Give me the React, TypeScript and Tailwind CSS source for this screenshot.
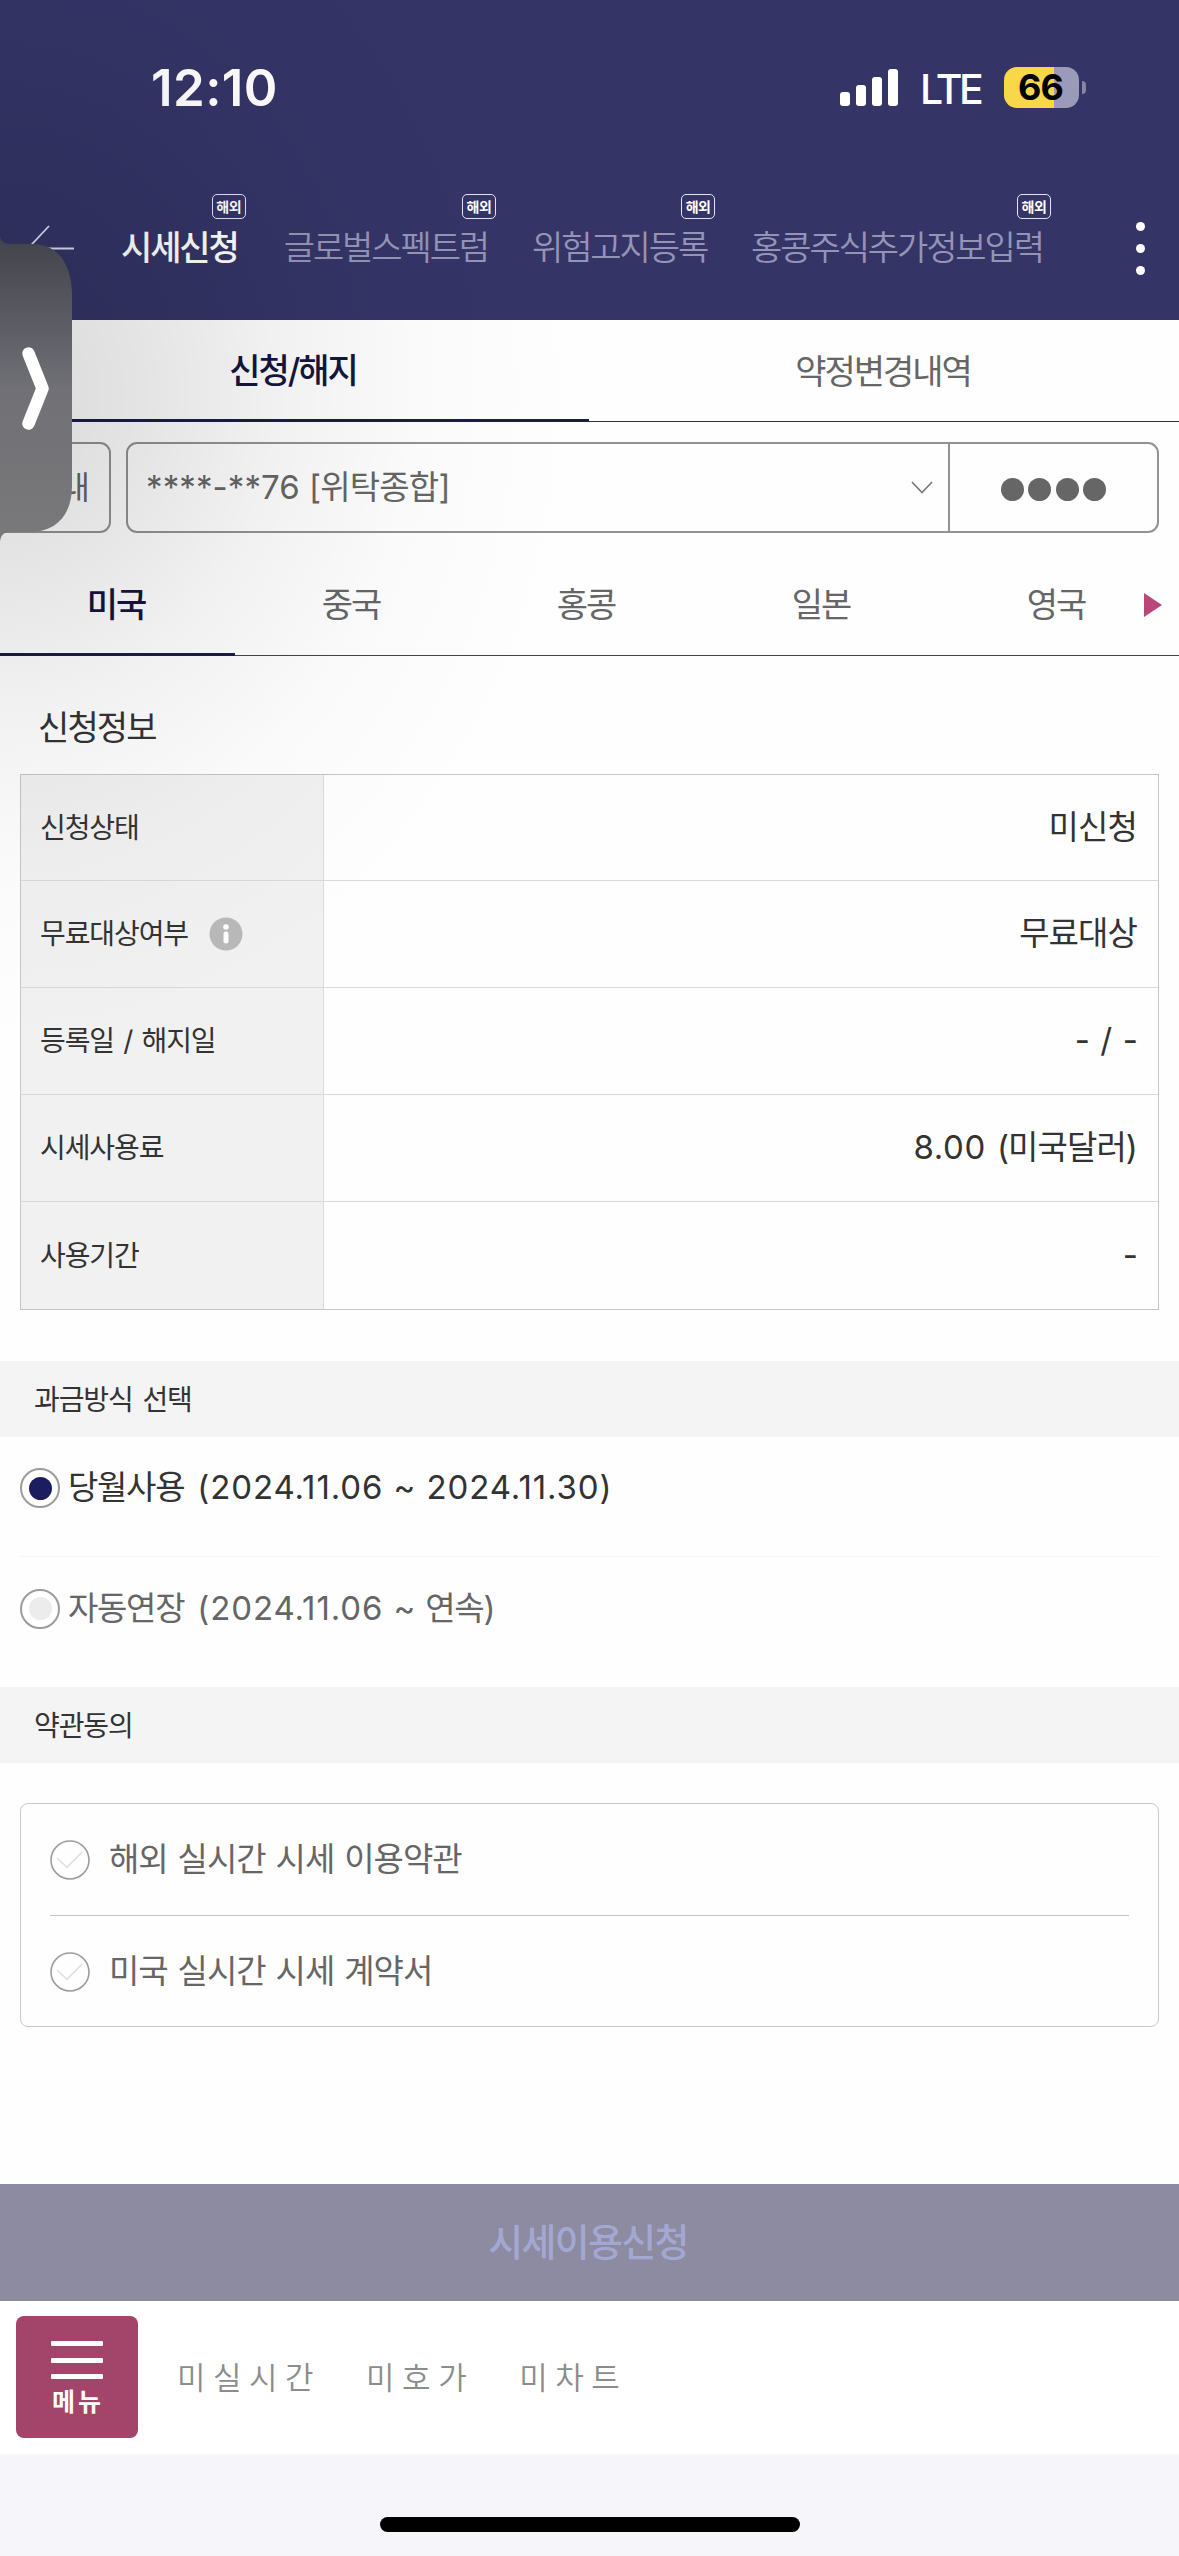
import type { ReactNode } from "react";

const menuTabs = [
  { label: "시세신청", active: true, gap: "ml-[47px]" },
  { label: "글로벌스펙트럼", active: false, gap: "ml-[46px]" },
  { label: "위험고지등록", active: false, gap: "ml-[44px]" },
  { label: "홍콩주식추가정보입력", active: false, gap: "ml-[44px]" },
];

const countries = ["미국", "중국", "홍콩", "일본", "영국"];

const rows = [
  { label: "신청상태", value: "미신청" },
  { label: "무료대상여부", value: "무료대상", info: true },
  { label: "등록일 / 해지일", value: "- / -" },
  { label: "시세사용료", value: "8.00 (미국달러)" },
  { label: "사용기간", value: "-" },
];

function StatusBar() {
  return (
    <div className="flex h-[176px] items-start pl-[151px] pr-[93px] text-white">
      <span className="mt-[58px] text-[51px] font-semibold leading-[60px] tracking-[0.4px]">
        12:10
      </span>
      <div className="ml-auto mt-[67px] flex h-[41px] items-center">
        <svg width="58" height="41" viewBox="0 0 58 41" fill="white">
          <rect x="0" y="25" width="10" height="14" rx="3" />
          <rect x="16" y="18" width="10" height="21" rx="3" />
          <rect x="32" y="10" width="10" height="29" rx="3" />
          <rect x="48" y="2" width="10" height="37" rx="3" />
        </svg>
        <span className="ml-[22px] mt-[3px] w-[84px] text-[41px] font-medium leading-[41px] tracking-[-3.6px]">
          LTE
        </span>
        <div className="flex h-[41px] w-[75px] items-center justify-center rounded-[13px] bg-[linear-gradient(90deg,#f8d84a_50px,#9b9bb9_50px)] pr-[2px] text-[36px] font-bold leading-[41px] tracking-[-1px] text-black">
          66
        </div>
        <div className="ml-[3px] h-[13px] w-[4px] rounded-r-full bg-[#85859f]" />
      </div>
    </div>
  );
}

function MenuTabs() {
  return (
    <div className="flex h-[144px] items-start">
      <svg className="ml-[26px] mt-[48px]" width="48" height="48" viewBox="0 0 48 48">
        <path d="M23 2 2 24.500H48" fill="none" stroke="#dcdcf5" strokeWidth="1.8" />
      </svg>
      {menuTabs.map((tab) => (
        <div key={tab.label} className={`flex flex-col items-end ${tab.gap}`}>
          <span className="-mr-[8px] mt-[18px] flex h-[25px] w-[34px] items-center justify-center rounded-[5px] border-[1.5px] border-[#e4e4f4] text-[14px] font-bold leading-[20px] tracking-[-0.5px] text-white">
            해외
          </span>
          <span
            className={`mt-[4px] whitespace-nowrap text-[34px] leading-[50px] tracking-[-2.1px] ${
              tab.active ? "font-medium text-white" : "font-[350] text-[#9494b6]"
            }`}
          >
            {tab.label}
          </span>
        </div>
      ))}
      <div className="ml-auto mr-[34px] mt-[46px] flex flex-col gap-[13px]">
        <i className="size-[9px] rounded-full bg-white" />
        <i className="size-[9px] rounded-full bg-white" />
        <i className="size-[9px] rounded-full bg-white" />
      </div>
    </div>
  );
}

function PageTabs() {
  return (
    <div className="flex h-[102px] text-[34px] tracking-[-2px]">
      <div className="flex w-[589px] items-center justify-center border-b-[3px] border-[#1b1d48] pr-[3px] pt-[2px] font-medium text-[#15153f]">
        신청/해지
      </div>
      <div className="flex flex-1 items-center justify-center border-b border-[#2f2f45] pr-[2px] pt-[2px] text-[#666]">
        약정변경내역
      </div>
    </div>
  );
}

function AccountRow() {
  return (
    <div className="flex h-[131px] pt-[20px] pr-[20px] text-[#666]">
      <div className="-ml-[20px] flex h-[91px] w-[131px] items-center justify-end rounded-[11px] border-2 border-[#929292] pr-[19px] text-[32px]">
        안내
      </div>
      <div className="ml-[15px] flex h-[91px] flex-1 rounded-[11px] border-2 border-[#929292]">
        <div className="flex flex-1 items-center border-r-2 border-[#929292] pl-[18px] pr-[15px] text-[33px]">
          <span className="tracking-[0.1px]">****-**76</span>
          <span className="ml-[9px] tracking-[-0.8px]">[위탁종합]</span>
          <svg className="ml-auto" width="22" height="13" viewBox="0 0 22 13">
            <path d="M1 1 11 11.5 21 1" fill="none" stroke="#777" strokeWidth="1.6" />
          </svg>
        </div>
        <div className="flex w-[207px] items-center justify-center gap-[4.5px] pt-[4px]">
          <i className="size-[23px] rounded-full bg-[#666]" />
          <i className="size-[23px] rounded-full bg-[#666]" />
          <i className="size-[23px] rounded-full bg-[#666]" />
          <i className="size-[23px] rounded-full bg-[#666]" />
        </div>
      </div>
    </div>
  );
}

function CountryTabs() {
  return (
    <div className="flex h-[103px] text-[34px] tracking-[-2px]">
      {countries.map((name, i) => (
        <div
          key={name}
          className={`flex w-[235px] shrink-0 items-center justify-center pr-[3px] ${
            i === 0
              ? "border-b-[3px] border-[#1b1d48] pt-[2px] font-medium text-[#15153f]"
              : "border-b border-[#444450] text-[#666]"
          }`}
        >
          {name}
        </div>
      ))}
      <div className="relative flex-1 border-b border-[#444450]">
        <svg className="absolute right-[17px] top-[40px]" width="18" height="24" viewBox="0 0 18 24">
          <path d="M0 0 18 12 0 24Z" fill="#b9487a" />
        </svg>
      </div>
    </div>
  );
}

function InfoTable() {
  return (
    <div className="mx-[20px] h-[536px] border border-[#c6c6c6] text-[#333]">
      {rows.map((row, i) => (
        <div
          key={row.label}
          className={`flex ${i === 0 ? "h-[106px]" : "h-[107px]"} ${
            i < rows.length - 1 ? "border-b border-[#d9d9d9]" : ""
          }`}
        >
          <div className="flex w-[303px] items-center border-r border-[#d9d9d9] bg-[#f1f1f1] pl-[19px] text-[28px] tracking-[-1.1px] [word-spacing:2.5px]">
            {row.label}
            {row.info && (
              <svg className="ml-[21px]" width="34" height="34" viewBox="0 0 34 34">
                <circle cx="17" cy="17" r="16.5" fill="#b9b9b9" />
                <circle cx="17" cy="10" r="2.8" fill="white" />
                <rect x="14.5" y="14.5" width="5" height="12" rx="2.2" fill="white" />
              </svg>
            )}
          </div>
          <div className="flex flex-1 items-center justify-end pr-[21px] text-[33px] tracking-[-0.9px] [word-spacing:3px]">
            {/* the price is set a little wider than the Korean text */}
            {row.value.startsWith("8.00") ? (
              <>
                <span className="mr-[11px] tracking-[0.6px]">8.00</span>
                {row.value.slice(5)}
              </>
            ) : (
              row.value
            )}
          </div>
        </div>
      ))}
    </div>
  );
}

function SectionBar({ children }: { children: ReactNode }) {
  return (
    <div className="flex h-[76px] items-center bg-[#f4f4f4] pl-[34px] pt-[2px] text-[28px] tracking-[-1.1px] text-[#333] [word-spacing:3px]">
      {children}
    </div>
  );
}

function RadioMark({ checked }: { checked: boolean }) {
  return (
    <span className="flex size-[40px] items-center justify-center rounded-full border-2 border-[#9c9c9c] bg-white">
      <span className={`size-[23px] rounded-full ${checked ? "bg-[#1c1d5e]" : "bg-[#ececec]"}`} />
    </span>
  );
}

function TermRow({ label }: { label: string }) {
  return (
    <div className="flex h-[111px] items-center text-[33px] tracking-[-1px] text-[#666] [word-spacing:1.6px]">
      <svg className="mr-[19px]" width="40" height="40" viewBox="0 0 40 40" fill="none">
        <circle cx="20" cy="20" r="19" stroke="#9c9c9c" strokeWidth="1.6" />
        <path d="M7 18 17 27.5 32 12" stroke="#dedede" strokeWidth="1.5" />
      </svg>
      {label}
    </div>
  );
}

function SideHandle() {
  return (
    <svg className="absolute left-0 top-[232px]" width="74" height="314" viewBox="0 0 74 314">
      <defs>
        <linearGradient id="handle" x1="0" y1="0" x2="0" y2="1">
          <stop offset="0" stopColor="#42424a" />
          <stop offset="0.3" stopColor="#5d5d66" />
          <stop offset="0.5" stopColor="#707076" />
          <stop offset="1" stopColor="#79797a" />
        </linearGradient>
      </defs>
      <path
        d="M0 4Q1 12 10 12H32C58 12 72 32 72 64V254C72 284 55 300 30 300H10Q1 300 0 309Z"
        fill="url(#handle)"
      />
      <path
        d="M28.500 121.500 42.500 156.500 28.500 191.500"
        fill="none"
        stroke="white"
        strokeWidth="12.500"
        strokeLinecap="round"
        strokeLinejoin="round"
      />
    </svg>
  );
}

export default function App() {
  return (
    <div className="relative flex h-[2556px] w-[1179px] flex-col overflow-hidden bg-[#fefefe] font-['Inter','Noto_Sans_CJK_KR',sans-serif]">
      <header className="h-[320px] bg-[#343467]">
        <StatusBar />
        <MenuTabs />
      </header>

      <PageTabs />
      <AccountRow />
      <CountryTabs />

      <h2 className="flex h-[118px] items-center pl-[38px] pt-[25px] text-[34px] tracking-[-1.9px] text-[#333]">
        신청정보
      </h2>
      <InfoTable />

      <div className="h-[51px]" />
      <SectionBar>과금방식 선택</SectionBar>
      <div className="mx-[20px] h-[250px] text-[33px]">
        <label className="flex h-[120px] items-center border-b border-[#f5f5f5] pb-[17px] text-[#333]">
          <RadioMark checked />
          <span className="ml-[8px] tracking-[-1.3px]">당월사용</span>
          <span className="ml-[13px] tracking-[0.9px]">(2024.11.06 ~ 2024.11.30)</span>
        </label>
        <label className="flex h-[120px] items-center pb-[17px] text-[#666]">
          <RadioMark checked={false} />
          <span className="ml-[8px] tracking-[-1.3px]">자동연장</span>
          <span className="ml-[13px] tracking-[0.9px]">(2024.11.06 ~</span>
          <span className="ml-[9px] tracking-[-1.3px]">연속)</span>
        </label>
      </div>

      <SectionBar>약관동의</SectionBar>
      <div className="mx-[20px] mt-[40px] h-[224px] rounded-[8px] border border-[#c9c9c9] px-[29px]">
        <TermRow label="해외 실시간 시세 이용약관" />
        <div className="h-px bg-[#c4c4c4]" />
        <TermRow label="미국 실시간 시세 계약서" />
      </div>

      <button className="mt-[157px] h-[117px] bg-[#8c8ba1] pr-[3px] text-[38px] font-medium tracking-[-1.7px] text-[#a3a8d2]">
        시세이용신청
      </button>
      <nav className="flex h-[153px] items-start bg-white pl-[16px] pt-[15px] text-[31px] font-[350] tracking-[7.5px] text-[#8c8c8c]">
        <div className="flex size-[122px] flex-col items-center rounded-[8px] bg-[#a3446a] pt-[25px]">
          <i className="h-[5px] w-[52px] rounded-[1px] bg-white" />
          <i className="mt-[12px] h-[5px] w-[52px] rounded-[1px] bg-white" />
          <i className="mt-[11px] h-[5px] w-[52px] rounded-[1px] bg-white" />
          <span className="mt-[6px] pl-[2px] text-[25px] font-bold leading-[34px] tracking-[3px] text-white">
            메뉴
          </span>
        </div>
        <div className="flex h-[122px] items-center gap-[45px] pl-[39px] pt-[2px]">
          <span>미실시간</span>
          <span>미호가</span>
          <span>미차트</span>
        </div>
      </nav>
      <div className="flex flex-1 justify-center bg-[#f5f5fa] pt-[63px]">
        <div className="h-[15px] w-[420px] rounded-full bg-black" />
      </div>

      {/* soft shadow cast by the side handle */}
      <div className="pointer-events-none absolute inset-x-0 top-0 h-[1060px] bg-[radial-gradient(ellipse_580px_660px_at_0px_390px,rgba(0,0,0,0.15)_0%,rgba(0,0,0,0.1)_25%,rgba(0,0,0,0.05)_48%,rgba(0,0,0,0.015)_72%,transparent_100%)]" />
      <SideHandle />
    </div>
  );
}
